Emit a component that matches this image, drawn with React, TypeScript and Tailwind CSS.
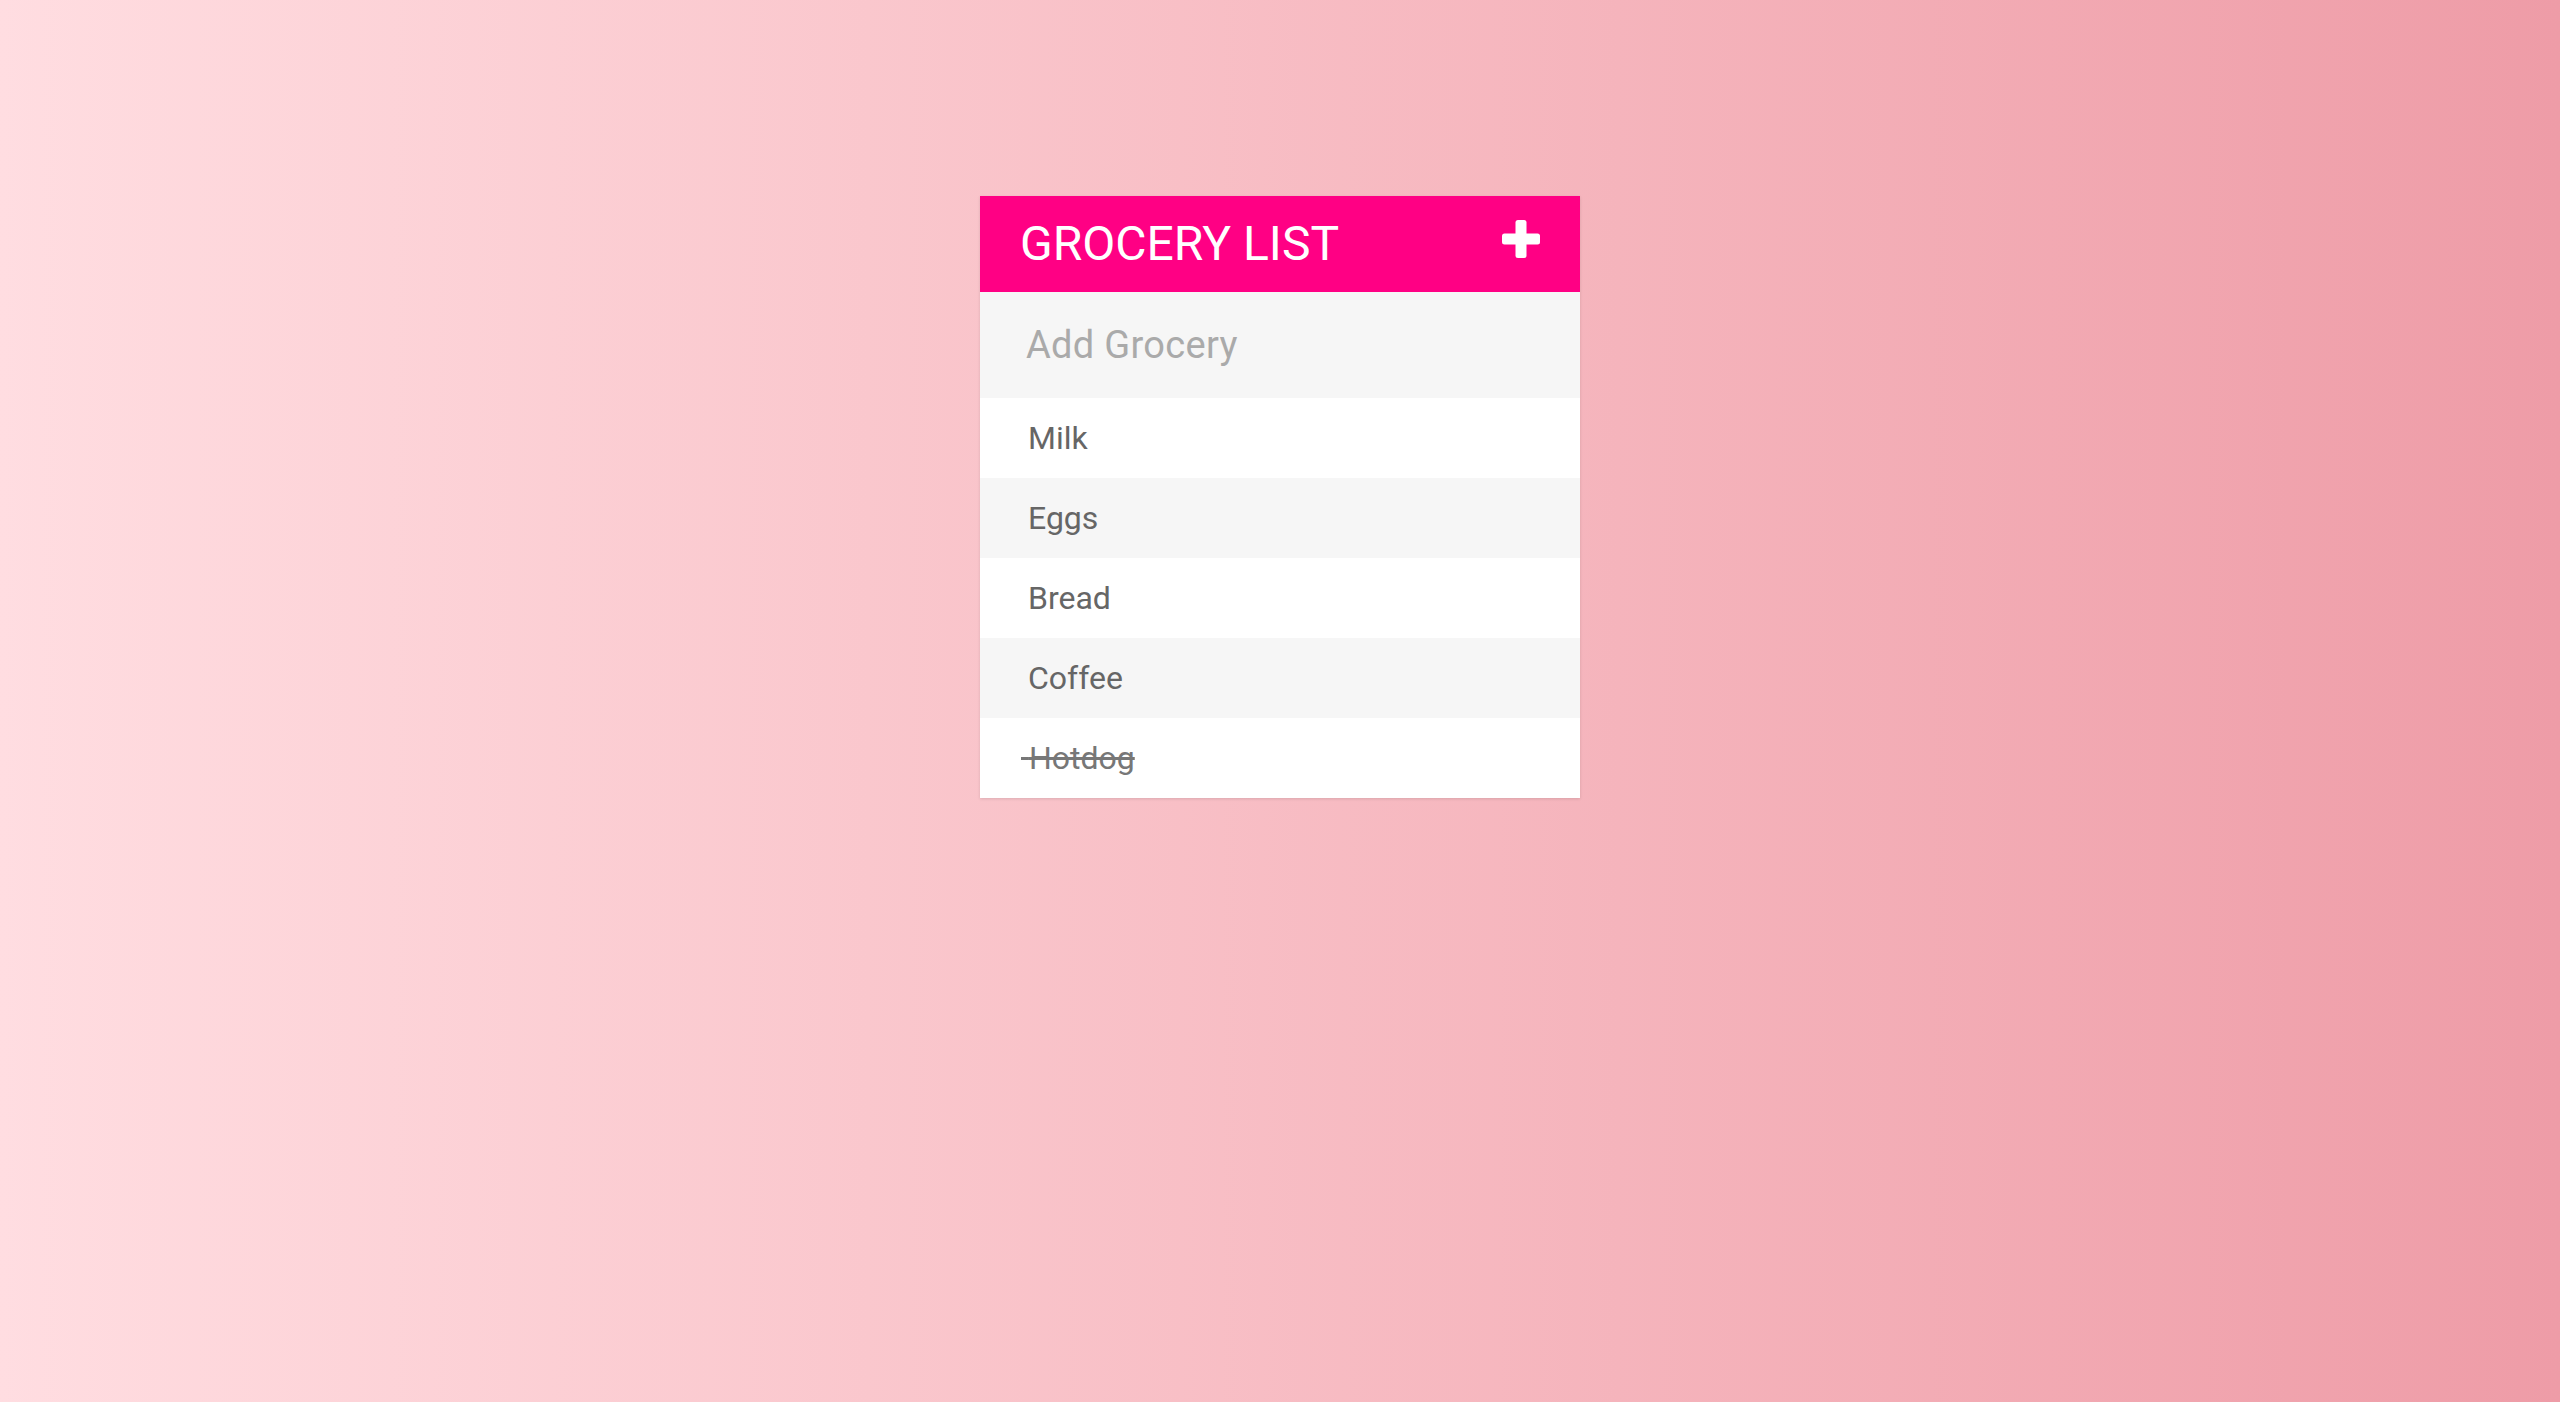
export default function App() {
  const items = [
    { name: "Milk", done: false },
    { name: "Eggs", done: false },
    { name: "Bread", done: false },
    { name: "Coffee", done: false },
    { name: "Hotdog", done: true },
  ];

  return (
    <div className="min-h-[1402px] w-full bg-gradient-to-r from-[#ffdde1] to-[#ee9ca7] pt-[196px] font-['Roboto',sans-serif]">
      <div className="mx-auto w-[600px] bg-white shadow-[0_1px_3px_rgba(0,0,0,0.12)]">
        <div className="flex h-[96px] items-center justify-between bg-[#ff0084] pl-[40px] pr-[40px]">
          <h1 className="text-[48px] leading-none text-white">GROCERY LIST</h1>
          <svg width="38" height="38" viewBox="0 0 38 38" className="mb-[10px] text-white">
            <rect x="13.5" y="0" width="11" height="38" rx="2.5" fill="currentColor" />
            <rect x="0" y="13.5" width="38" height="11" rx="2.5" fill="currentColor" />
          </svg>
        </div>
        <div className="flex h-[106px] items-center bg-[#f6f6f6] pl-[46px]">
          <span className="text-[38px] tracking-[0.3px] text-[#aaaaaa]">Add Grocery</span>
        </div>
        {items.map((item, i) => (
          <div
            key={item.name}
            className={`flex h-[80px] items-center ${i % 2 === 0 ? "bg-white" : "bg-[#f6f6f6]"} ${item.done ? "pl-[41px]" : "pl-[48px]"}`}
          >
            {item.done ? (
              <span className="text-[32px] text-[#777777] line-through">{"\u00a0"}Hotdog</span>
            ) : (
              <span className="text-[32px] text-[#666666]">{item.name}</span>
            )}
          </div>
        ))}
      </div>
    </div>
  );
}
